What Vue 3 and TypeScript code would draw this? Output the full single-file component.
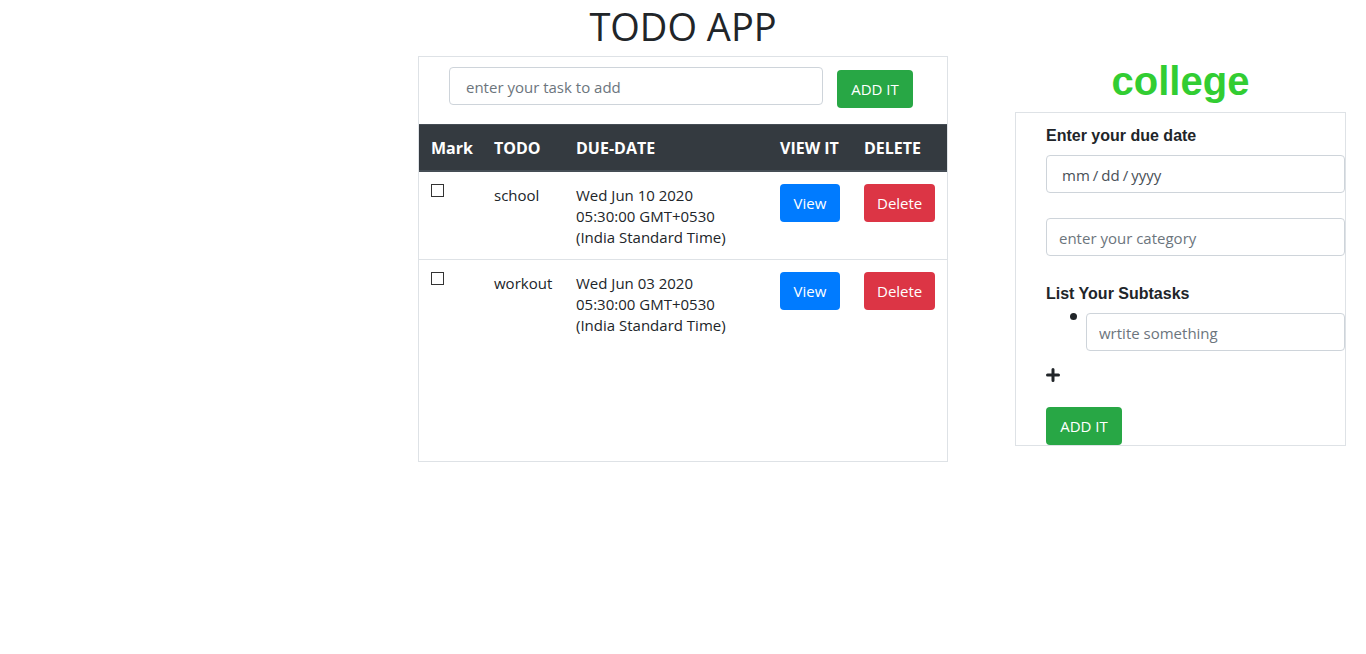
<script setup lang="ts">
import { ref } from 'vue'

interface Todo {
  id: number
  title: string
  due: string
  done: boolean
}

const todos = ref<Todo[]>([
  { id: 1, title: 'school', due: 'Wed Jun 10 2020 05:30:00 GMT+0530 (India Standard Time)', done: false },
  { id: 2, title: 'workout', due: 'Wed Jun 03 2020 05:30:00 GMT+0530 (India Standard Time)', done: false },
])
const task = ref('')
const selected = ref('college')
const dueDate = ref('')
const category = ref('')
const subtasks = ref<string[]>([''])

function addTodo() {
  if (!task.value.trim()) return
  todos.value.push({ id: Date.now(), title: task.value, due: '', done: false })
  task.value = ''
}

function viewTodo(todo: Todo) {
  selected.value = todo.title
}

function removeTodo(id: number) {
  todos.value = todos.value.filter((t) => t.id !== id)
}

function addSubtask() {
  subtasks.value.push('')
}
</script>

<template>
  <div class="page">
    <main class="todo">
      <h1 class="title">TODO APP</h1>
      <section class="panel todo-panel">
        <form class="add-form" @submit.prevent="addTodo">
          <input v-model="task" class="field task-field" type="text" placeholder="enter your task to add" aria-label="Task" />
          <button class="btn green" type="submit">ADD IT</button>
        </form>
        <table class="table">
          <colgroup>
            <col class="col-mark" />
            <col class="col-todo" />
            <col />
            <col class="col-view" />
            <col class="col-delete" />
          </colgroup>
          <thead>
            <tr>
              <th scope="col">Mark</th>
              <th scope="col">TODO</th>
              <th scope="col">DUE-DATE</th>
              <th scope="col">VIEW IT</th>
              <th scope="col">DELETE</th>
            </tr>
          </thead>
          <tbody>
            <tr v-for="todo in todos" :key="todo.id">
              <td><input v-model="todo.done" class="check" type="checkbox" :aria-label="todo.title" /></td>
              <td class="text-cell">{{ todo.title }}</td>
              <td class="text-cell">{{ todo.due }}</td>
              <td><button class="btn blue" type="button" @click="viewTodo(todo)">View</button></td>
              <td><button class="btn red" type="button" @click="removeTodo(todo.id)">Delete</button></td>
            </tr>
          </tbody>
        </table>
      </section>
    </main>

    <aside class="details">
      <h2 class="details-title">{{ selected }}</h2>
      <form class="panel details-form" @submit.prevent>
        <label class="label" for="due">Enter your due date</label>
        <input id="due" v-model="dueDate" class="field date-field" type="date" />
        <input v-model="category" class="field category-field" type="text" placeholder="enter your category" aria-label="Category" />
        <h3 class="label">List Your Subtasks</h3>
        <ul class="subtasks">
          <li v-for="(_, i) in subtasks" :key="i">
            <input v-model="subtasks[i]" class="field" type="text" placeholder="wrtite something" aria-label="Subtask" />
          </li>
        </ul>
        <button class="plus" type="button" aria-label="Add subtask" @click="addSubtask">
          <svg viewBox="0 0 14 14" width="14" height="14" aria-hidden="true">
            <path
              d="M7 1.5V12.5M1.5 7H12.5"
              fill="none"
              stroke="currentColor"
              stroke-width="3"
              stroke-linecap="round"
            />
          </svg>
        </button>
        <button class="btn green" type="submit">ADD IT</button>
      </form>
    </aside>
  </div>
</template>

<style>
body {
  margin: 0;
  background: #fff;
}
</style>

<style scoped>
.page,
.page * {
  box-sizing: border-box;
}

.page {
  display: grid;
  grid-template-columns: 418fr 530fr 418fr;
  align-items: start;
  color: #212529;
  font: 15px/21px 'Open Sans', 'Noto Sans', sans-serif;
}

.todo {
  grid-column: 2;
}

.title {
  margin: 0 0 4px;
  font-size: 38px;
  line-height: 52px;
  font-weight: 400;
  text-align: center;
}

.panel {
  border: 1px solid #dee2e6;
}

.todo-panel {
  min-height: 406px;
}

.add-form {
  display: flex;
  align-items: flex-start;
  gap: 14px;
  padding: 10px 34px 16px 30px;
}

.field {
  display: block;
  width: 100%;
  height: 38px;
  padding: 8px 12px 6px;
  border: 1px solid #ced4da;
  border-radius: 4px;
  background: #fff;
  color: #495057;
  font: inherit;
  outline: none;
}

.field::placeholder {
  color: #6c757d;
  opacity: 1;
}

.field:focus {
  border-color: #80bdff;
}

.task-field {
  flex: 1;
  min-width: 0;
  padding-left: 16px;
}

.btn {
  min-width: 60px;
  height: 38px;
  padding: 0 12px;
  border: 1px solid transparent;
  border-radius: 4px;
  color: #fff;
  font: inherit;
  white-space: nowrap;
  cursor: pointer;
}

.add-form .btn {
  margin-top: 3px;
}

.green {
  min-width: 76px;
  background: #28a745;
}

.blue {
  background: #007bff;
}

.red {
  background: #dc3545;
}

.table {
  width: 100%;
  table-layout: fixed;
  border-spacing: 0;
}

.col-mark {
  width: 63px;
}

.col-todo {
  width: 82px;
}

.col-view {
  width: 84px;
}

.col-delete {
  width: 95px;
}

th {
  padding: 13px 12px 11px;
  border-top: 1px solid #454d55;
  border-bottom: 2px solid #454d55;
  background: #343a40;
  color: #fff;
  font-size: 16px;
  font-weight: 700;
  line-height: 21px;
  text-align: left;
  white-space: nowrap;
}

td {
  padding: 12px;
  vertical-align: top;
}

.text-cell {
  padding: 13px 12px 11px;
}

tbody tr + tr td {
  border-top: 1px solid #dee2e6;
}

.check {
  display: block;
  width: 13px;
  height: 13px;
  margin: 0;
  appearance: none;
  border: 1px solid #333;
  background: #fff;
}

.check:checked {
  background: #333;
}

.table .btn {
  display: block;
}

.details {
  padding: 56px 20px 0 67px;
}

.details-title {
  margin: 0 0 6px;
  color: #32cd32;
  font: 700 40px/50px 'Liberation Sans', Arial, sans-serif;
  text-align: center;
}

.details-form {
  display: flex;
  flex-direction: column;
  align-items: flex-start;
  padding: 10px 0 0 30px;
}

.label {
  margin: 0 0 6px;
  font: 700 16px/26px 'Liberation Sans', Arial, sans-serif;
}

.date-field {
  padding-left: 14px;
}

.date-field::-webkit-calendar-picker-indicator {
  display: none;
}

.date-field::-webkit-datetime-edit-text {
  padding: 0 2px;
}

.category-field {
  margin: 25px 0;
}

.subtasks {
  width: 100%;
  margin: 0 0 17px;
  padding: 0 0 0 40px;
  list-style: none;
}

.subtasks li {
  position: relative;
}

.subtasks li::before {
  content: '';
  position: absolute;
  top: 0;
  left: -16px;
  width: 7px;
  height: 7px;
  border-radius: 50%;
  background: #212529;
}

.plus {
  display: block;
  height: 14px;
  margin: 0 0 25px;
  padding: 0;
  border: 0;
  background: none;
  color: #212529;
  cursor: pointer;
}

.plus svg {
  display: block;
}
</style>
